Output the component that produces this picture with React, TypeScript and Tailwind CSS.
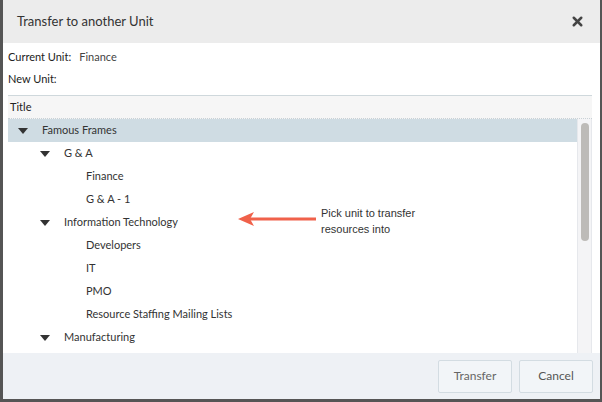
import { X } from "lucide-react";

type Node = { label: string; level: number; open?: boolean; selected?: boolean };

const rows: Node[] = [
  { label: "Famous Frames", level: 0, open: true, selected: true },
  { label: "G & A", level: 1, open: true },
  { label: "Finance", level: 2 },
  { label: "G & A - 1", level: 2 },
  { label: "Information Technology", level: 1, open: true },
  { label: "Developers", level: 2 },
  { label: "IT", level: 2 },
  { label: "PMO", level: 2 },
  { label: "Resource Staffing Mailing Lists", level: 2 },
  { label: "Manufacturing", level: 1, open: true },
];

const indent = ["pl-[10px]", "pl-[32px]", "pl-[78px]"];

function Caret() {
  return (
    <svg width="10" height="6" viewBox="0 0 10 6" className="mr-[14px] shrink-0">
      <path d="M0 0 H10 L5 6 Z" fill="#333" />
    </svg>
  );
}

function Arrow() {
  return (
    <svg width="80" height="16" viewBox="0 0 80 16" className="shrink-0">
      <path d="M12 8 H78" stroke="#f0614a" strokeWidth="3" />
      <path d="M0 8 L16 1 L12 8 L16 15 Z" fill="#f0614a" />
    </svg>
  );
}

export default function App() {
  return (
    <div
      className="w-[602px] h-[402px] bg-white flex flex-col border-l-[3px] border-b-[3px] border-r-[2px] border-[#555] text-[#333] overflow-hidden"
      style={{ fontFamily: "Lato, 'Open Sans', sans-serif" }}
    >
      <div className="h-[43px] shrink-0 bg-[#ececec] flex items-center justify-between pl-[14px] pr-[15px]">
        <span className="text-[13px] text-[#333]">Transfer to another Unit</span>
        <X size={15} strokeWidth={4} className="text-[#444]" />
      </div>

      <div className="flex-1 flex flex-col px-[5px] pt-[7px] min-h-0">
        <div className="text-[11px] flex h-[14px] items-center">
          <span className="text-[#222]">Current Unit:</span>
          <span className="ml-[8px] text-[#444]">Finance</span>
        </div>
        <div className="text-[11px] h-[14px] mt-[8px] flex items-center text-[#222]">New Unit:</div>

        <div className="mt-[9px] mr-[3px] flex-1 flex flex-col min-h-0 border-t border-[#cfd8dc]">
          <div className="h-[23px] shrink-0 bg-[#f6f6f6] border-b border-dotted border-[#c9d1d6] flex items-center pl-[2px] text-[11px] text-[#222]">
            Title
          </div>
          <div className="flex flex-1 min-h-0">
            <div className="flex-1 overflow-hidden">
              {rows.map((r, i) => (
                <div
                  key={i}
                  className={`relative h-[23px] flex items-center text-[11px] ${indent[r.level]} ${
                    r.selected ? "bg-[#cfdce3]" : ""
                  }`}
                >
                  {r.open && <Caret />}
                  <span className="text-[#333]">{r.label}</span>
                  {r.label === "Information Technology" && (
                    <div className="absolute left-[230px] top-[-6px] flex items-start">
                      <div className="mt-[6px]">
                        <Arrow />
                      </div>
                      <div
                        className="ml-[3px] text-[11px] leading-[16px] text-[#333]"
                        style={{ fontFamily: "'Liberation Sans', Arial, sans-serif" }}
                      >
                        Pick unit to transfer
                        <br />
                        resources into
                      </div>
                    </div>
                  )}
                </div>
              ))}
            </div>
            <div className="w-[15px] shrink-0 bg-[#f4f4f6] border-x border-[#e6e8ec] flex flex-col items-center pt-[4px]">
              <div className="w-[8px] h-[118px] rounded-full bg-[#bdbbb8]" />
            </div>
          </div>
        </div>
      </div>

      <div className="h-[46px] shrink-0 bg-[#eef1f5] flex items-center justify-end gap-[7px] pr-[7px]">
        <button className="w-[74px] h-[33px] border border-[#d3dce2] rounded-[2px] bg-[#f2f5f8] text-[12px] text-[#666]">
          Transfer
        </button>
        <button className="w-[74px] h-[33px] border border-[#d3dce2] rounded-[2px] bg-[#f2f5f8] text-[12px] text-[#555]">
          Cancel
        </button>
      </div>
    </div>
  );
}
